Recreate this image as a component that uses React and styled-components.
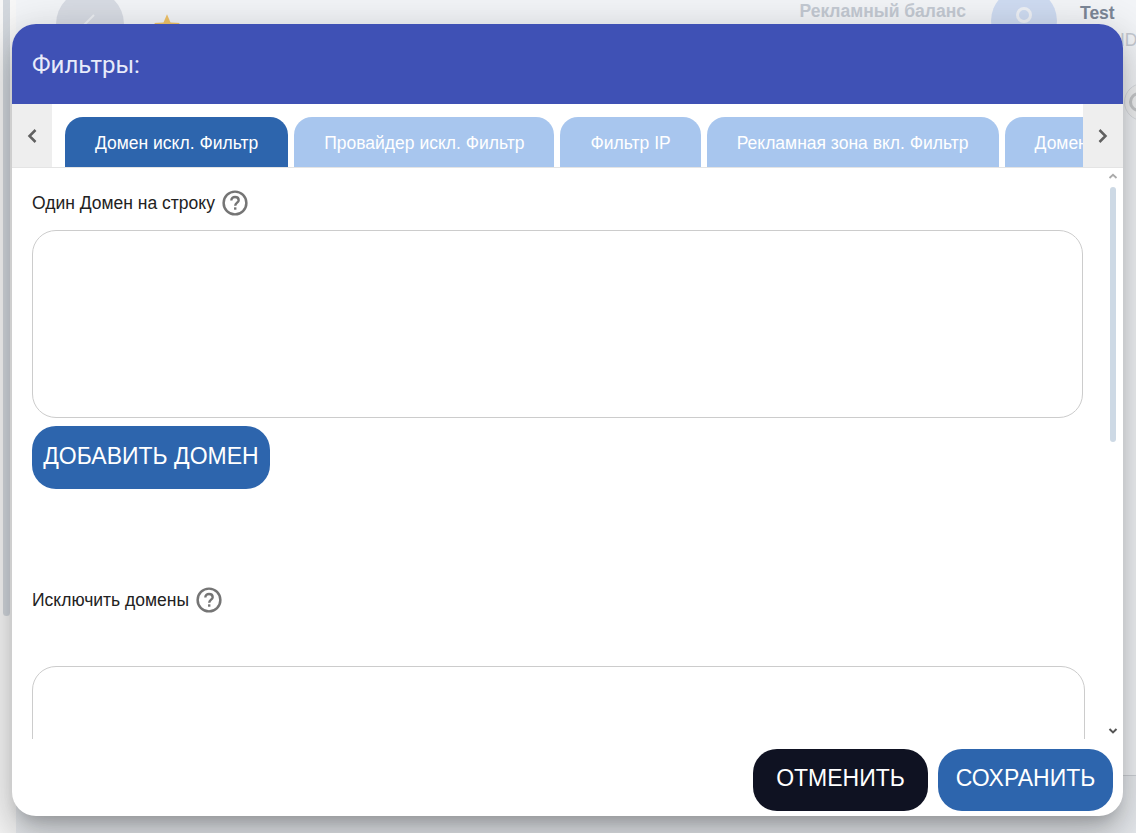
import React from 'react';
import styled, { createGlobalStyle } from 'styled-components';

const Global = createGlobalStyle`
  html, body { margin: 0; padding: 0; height: 100%; overflow: hidden; }
  body { font-family: "Liberation Sans", Arial, sans-serif; }
  * { box-sizing: border-box; }
`;

const tabs = [
  { label: 'Домен искл. Фильтр', active: true },
  { label: 'Провайдер искл. Фильтр' },
  { label: 'Фильтр IP' },
  { label: 'Рекламная зона вкл. Фильтр' },
  { label: 'Домен вкл. Фильтр' },
];

function Chevron({ dir }) {
  return (
    <svg width="14" height="16" viewBox="0 0 14 16" fill="none">
      <path
        d={dir === 'left' ? 'M10.5 2 L4.5 8 L10.5 14' : 'M3.5 2 L9.5 8 L3.5 14'}
        stroke="#606060"
        strokeWidth="2.5"
      />
    </svg>
  );
}

function Help() {
  return (
    <HelpIcon viewBox="0 0 24 24" width="26" height="26">
      <circle cx="12" cy="12" r="10.5" fill="none" stroke="#757575" strokeWidth="2.3" />
      <path
        d="M8.6 9.6 C8.6 7.6 10.1 6.4 12 6.4 C14 6.4 15.4 7.7 15.4 9.4 C15.4 11.6 12.2 11.9 12.2 14.6"
        fill="none"
        stroke="#757575"
        strokeWidth="2.2"
      />
      <rect x="11.1" y="16" width="2.2" height="2.2" fill="#757575" />
    </HelpIcon>
  );
}

export default function App() {
  return (
    <Page>
      <Global />
      <Sidebar>
        <SideThumb />
      </Sidebar>
      <Main>
        <TopBar>
          <BackCircle>
            <svg width="22" height="22" viewBox="0 0 22 22">
              <path d="M15 2 L5 12" stroke="#eef0f4" strokeWidth="2" fill="none" />
            </svg>
          </BackCircle>
          <Star viewBox="0 0 24 24" width="28" height="28">
            <path d="M12 1 L15 8.2 L23 8.6 L17.4 14.9 L19.2 23 L12 18.8 L4.8 23 L6.6 14.9 L1 8.6 L9 8.2 Z" fill="#f0c368" />
          </Star>
          <Balance>Рекламный баланс</Balance>
          <Avatar>
            <AvatarDot />
          </Avatar>
          <User>
            <UserName>Test</UserName>
            <UserId>ID</UserId>
          </User>
        </TopBar>
        <MainBody />
        <BottomBar />
      </Main>
      <SideButton>
        <SideButtonRing />
      </SideButton>

      <Modal>
        <Header>Фильтры:</Header>
        <TabBar>
          <ScrollBtn>
            <Chevron dir="left" />
          </ScrollBtn>
          <TabList>
            {tabs.map((t) => (
              <Tab key={t.label} $active={t.active}>
                {t.label}
              </Tab>
            ))}
          </TabList>
          <ScrollBtn>
            <Chevron dir="right" />
          </ScrollBtn>
        </TabBar>
        <Content>
          <Scroller>
            <Label>
              Один Домен на строку <Help />
            </Label>
            <Area />
            <AddButton>ДОБАВИТЬ ДОМЕН</AddButton>
            <LabelLower>
              Исключить домены <Help />
            </LabelLower>
            <AreaLower />
          </Scroller>
          <ScrollTrack>
            <svg width="10" height="6" viewBox="0 0 10 6">
              <path d="M1.5 5 L5 1.8 L8.5 5" stroke="#aaa" strokeWidth="1.8" fill="none" />
            </svg>
            <ScrollThumb />
            <TrackEnd>
              <svg width="10" height="6" viewBox="0 0 10 6">
                <path d="M1.5 1 L5 4.4 L8.5 1" stroke="#555" strokeWidth="2" fill="none" />
              </svg>
            </TrackEnd>
          </ScrollTrack>
        </Content>
        <Footer>
          <FooterButton $dark>ОТМЕНИТЬ</FooterButton>
          <FooterButton>СОХРАНИТЬ</FooterButton>
        </Footer>
      </Modal>
    </Page>
  );
}

const Page = styled.div`
  position: relative;
  display: flex;
  width: 1136px;
  height: 833px;
  overflow: hidden;
  background: #f8f8f8;
`;

const Sidebar = styled.div`
  flex: none;
  width: 16px;
  padding-left: 3px;
`;

const SideThumb = styled.div`
  width: 7px;
  height: 616px;
  border-radius: 0 0 4px 4px;
  background: #d3d8de;
`;

const Main = styled.div`
  flex: 1;
  min-width: 0;
  display: flex;
  flex-direction: column;
  background: #f3f5f8;
`;

const TopBar = styled.div`
  flex: none;
  height: 60px;
  display: flex;
  align-items: flex-start;
  padding: 0 0 0 40px;
`;

const BackCircle = styled.div`
  flex: none;
  width: 68px;
  height: 68px;
  margin-top: -10px;
  border-radius: 50%;
  background: #d8dce4;
  display: flex;
  align-items: center;
  justify-content: center;
`;

const Star = styled.svg`
  flex: none;
  margin: 13px 0 0 29px;
`;

const Balance = styled.div`
  margin: 1px 0 0 auto;
  font-size: 17.5px;
  font-weight: 700;
  color: #c4cad3;
`;

const Avatar = styled.div`
  flex: none;
  width: 66px;
  height: 66px;
  margin: -12px 0 0 25px;
  padding-bottom: 12px;
  border-radius: 50%;
  background: #cfdcf2;
  display: flex;
  align-items: center;
  justify-content: center;
`;

const AvatarDot = styled.div`
  width: 16px;
  height: 16px;
  border: 3px solid #eef1f6;
  border-radius: 50%;
`;

const User = styled.div`
  flex: none;
  width: 56px;
  margin: 3px 0 0 23px;
  font-size: 17.5px;
  white-space: nowrap;
`;

const UserName = styled.div`
  font-weight: 700;
  color: #7c8797;
`;

const UserId = styled.div`
  margin: 6px 0 0 40px;
  color: #c5cad2;
`;

const MainBody = styled.div`
  flex: 1;
`;

const BottomBar = styled.div`
  flex: none;
  height: 58px;
  border-top: 1px solid #cfd3d8;
  background: #e9ecf0;
`;

const SideButton = styled.div`
  position: absolute;
  left: 1124px;
  top: 83px;
  width: 38px;
  height: 38px;
  padding-right: 8px;
  border-radius: 50%;
  background: #f2f3f4;
  border: 1px solid #dcdfe3;
  display: flex;
  align-items: center;
  justify-content: center;
`;

const SideButtonRing = styled.div`
  flex: none;
  width: 20px;
  height: 20px;
  border: 3px solid #c8cacc;
  border-radius: 50%;
`;

const Modal = styled.div`
  position: absolute;
  left: 12px;
  top: 24px;
  width: 1111px;
  height: 792px;
  background: #fff;
  border-radius: 24px;
  overflow: hidden;
  display: flex;
  flex-direction: column;
  box-shadow: 0 11px 15px -7px rgba(0, 0, 0, 0.2), 0 24px 38px 3px rgba(0, 0, 0, 0.14),
    0 9px 46px 8px rgba(0, 0, 0, 0.12);
`;

const Header = styled.div`
  height: 80px;
  flex: none;
  background: #3f51b5;
  color: #e8ebfa;
  font-size: 24px;
  display: flex;
  align-items: center;
  padding: 2px 0 0 20px;
  font-family: "Roboto", "Liberation Sans", sans-serif;
`;

const TabBar = styled.div`
  flex: none;
  height: 64px;
  display: flex;
  border-bottom: 1px solid #e4e4e4;
`;

const ScrollBtn = styled.div`
  flex: none;
  width: 40px;
  background: #eeeeee;
  display: flex;
  align-items: center;
  justify-content: center;
`;

const TabList = styled.div`
  flex: 1;
  min-width: 0;
  overflow: hidden;
  display: flex;
  align-items: flex-end;
  gap: 6px;
  padding-left: 13px;
`;

const Tab = styled.div`
  flex: none;
  height: 50px;
  padding: 2px 30px 0;
  border-radius: 18px 18px 0 0;
  background: ${(p) => (p.$active ? '#2d65ad' : '#a8c6ee')};
  color: #fff;
  font-size: 17.5px;
  display: flex;
  align-items: center;
`;

const Content = styled.div`
  position: relative;
  flex: 1;
  min-height: 0;
`;

const Scroller = styled.div`
  height: 100%;
  overflow: hidden;
  padding: 20px 38px 0 20px;
`;

const Label = styled.div`
  display: flex;
  align-items: center;
  gap: 7px;
  height: 30px;
  font-size: 17.5px;
  color: #222;
`;

const LabelLower = styled(Label)`
  margin-top: 96px;
`;

const HelpIcon = styled.svg`
  flex: none;
`;

const Area = styled.div`
  margin: 12px 2px 0 0;
  height: 188px;
  border: 1px solid #ccc;
  border-radius: 24px;
  background: #fff;
`;

const AreaLower = styled(Area)`
  margin: 51px 0 0;
`;

const AddButton = styled.button`
  display: block;
  margin-top: 8px;
  height: 63px;
  width: 238px;
  padding: 0 0 3px;
  border: none;
  border-radius: 24px;
  background: #2d65ad;
  color: #fff;
  font-family: inherit;
  font-size: 23px;
`;

const ScrollTrack = styled.div`
  position: absolute;
  right: 3px;
  top: 5px;
  bottom: 5px;
  width: 14px;
  display: flex;
  flex-direction: column;
  align-items: center;
`;

const ScrollThumb = styled.div`
  width: 6px;
  height: 255px;
  margin-top: 8px;
  border-radius: 3px;
  background: #cdd9e5;
`;

const TrackEnd = styled.div`
  margin-top: auto;
  line-height: 0;
`;

const Footer = styled.div`
  flex: none;
  height: 77px;
  display: flex;
  justify-content: flex-end;
  gap: 10px;
  padding: 10px 10px 5px 0;
`;

const FooterButton = styled.button`
  width: 175px;
  height: 62px;
  padding: 0 0 3px;
  border: none;
  border-radius: 24px;
  background: ${(p) => (p.$dark ? '#0f1222' : '#2d65ad')};
  color: #fff;
  font-family: inherit;
  font-size: 23px;
`;
